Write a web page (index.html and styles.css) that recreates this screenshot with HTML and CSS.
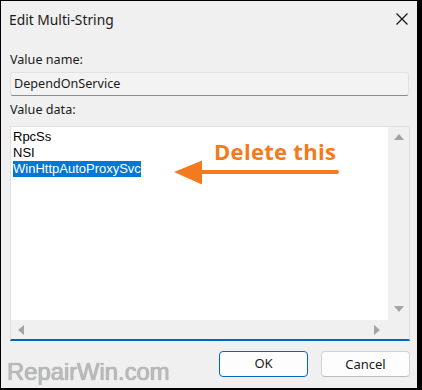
FILE: index.html
```html
<!DOCTYPE html>
<html>
<head>
<meta charset="utf-8">
<link rel="stylesheet" href="styles.css">
</head>
<body>
<div class="dialog">
  <div class="titlebar">
    <span class="title">Edit Multi-String</span>
    <svg class="close" width="14" height="14" viewBox="0 0 14 14"><path d="M1.5 1.5 L12.5 12.5 M12.5 1.5 L1.5 12.5" stroke="#1a1a1a" stroke-width="1.3" fill="none"/></svg>
  </div>
  <div class="content">
    <div class="label first">Value name:</div>
    <div class="textbox">DependOnService</div>
    <div class="label second">Value data:</div>
    <div class="textarea">
      <div class="text">
        <div class="line">RpcSs</div>
        <div class="line">NSI</div>
        <div class="line"><span class="sel">WinHttpAutoProxySvc</span></div>
      </div>
      <div class="vscroll">
        <svg width="10" height="6" viewBox="0 0 10 6"><path d="M5 0 L10 6 L0 6 Z" fill="#a3a3a3"/></svg>
        <svg width="10" height="6" viewBox="0 0 10 6"><path d="M0 0 L10 0 L5 6 Z" fill="#a3a3a3"/></svg>
      </div>
      <div class="hscroll">
        <svg width="6" height="10" viewBox="0 0 6 10"><path d="M0 5 L6 0 L6 10 Z" fill="#a3a3a3"/></svg>
        <svg width="6" height="10" viewBox="0 0 6 10"><path d="M6 5 L0 0 L0 10 Z" fill="#a3a3a3"/></svg>
      </div>
      <div class="corner"></div>
    </div>
    <div class="buttons">
      <div class="btn ok">OK</div>
      <div class="btn">Cancel</div>
    </div>
  </div>
  <div class="annotation">Delete this</div>
  <svg class="arrow" width="172" height="30" viewBox="0 0 172 30">
    <path d="M2 14 L30 2.5 L30 26.5 Z" fill="#f47a20"/>
    <path d="M28 14 L165 14" stroke="#f47a20" stroke-width="4" stroke-linecap="round"/>
  </svg>
  <div class="watermark">RepairWin.com</div>
</div>
</body>
</html>
```
FILE: styles.css
```css
* { box-sizing: border-box; }
html, body { margin: 0; padding: 0; }
body { width: 422px; height: 390px; background: #000; overflow: hidden; }
.dialog {
  position: relative;
  width: 422px;
  height: 390px;
  border-style: solid;
  border-color: #000;
  border-width: 1px 5px 2px 1px;
  background: #f0f0f0;
  font-family: "Noto Sans", sans-serif;
  color: #1a1a1a;
}
.titlebar {
  height: 36px;
  display: flex;
  align-items: center;
  justify-content: space-between;
  padding: 0 8px 0 8px;
}
.title { font-size: 13.8px; }
.content { padding: 0 6px 0 9px; }
.label { font-size: 12.6px; line-height: 16px; }
.label.first { margin-top: 15px; }
.label.second { margin-top: 6px; }
.textbox {
  margin-top: 4px;
  height: 24px;
  width: 399px;
  border: 1px solid #e2e2e2;
  border-bottom: 1px solid #8c8c8c;
  border-radius: 3px;
  background: #f3f3f3;
  font-size: 12.6px;
  line-height: 22px;
  padding-left: 3px;
}
.textarea {
  margin-top: 8px;
  width: 400px;
  height: 215px;
  border: 1px solid #e0e0e0;
  border-bottom: 2px solid #0067c0;
  display: grid;
  grid-template-columns: 1fr 21px;
  grid-template-rows: 1fr 19px;
  background: #f0f0f0;
}
.text {
  background: #fff;
  padding: 2px 0 0 2px;
  font-family: "Liberation Sans", Arial, sans-serif;
  font-size: 13px;
  color: #000;
}
.line { line-height: 16px; height: 16px; }
.sel { background: #0078d7; color: #fff; display: inline-block; line-height: 16px; }
.vscroll {
  display: flex;
  flex-direction: column;
  align-items: center;
  justify-content: space-between;
  padding: 7px 0 8px 0;
}
.hscroll {
  display: flex;
  align-items: center;
  justify-content: space-between;
  padding: 0 8px 0 7px;
}
.buttons {
  margin-top: 10px;
  display: flex;
  justify-content: flex-end;
  gap: 13px;
  padding-right: 1px;
}
.btn {
  width: 89px;
  height: 26px;
  border: 1px solid #d3d3d3;
  border-bottom-color: #bdbdbd;
  border-radius: 4px;
  background: #fdfdfd;
  font-size: 13px;
  line-height: 24px;
  text-align: center;
}
.btn.ok { border: 1.5px solid #0067c0; line-height: 23px; }
.annotation {
  position: absolute;
  left: 213px;
  top: 136px;
  font-family: "Open Sans", sans-serif;
  font-weight: bold;
  font-size: 22px;
  letter-spacing: 0.3px;
  line-height: 28px;
  color: #f47a20;
}
.arrow { position: absolute; left: 171px; top: 157px; }
.watermark {
  position: absolute;
  left: 6px;
  top: 359px;
  font-family: "Liberation Sans", Arial, sans-serif;
  font-size: 23.8px;
  line-height: 24px;
  color: #bbbbbb;
  text-shadow: 0 0 1px #808080;
}
```
